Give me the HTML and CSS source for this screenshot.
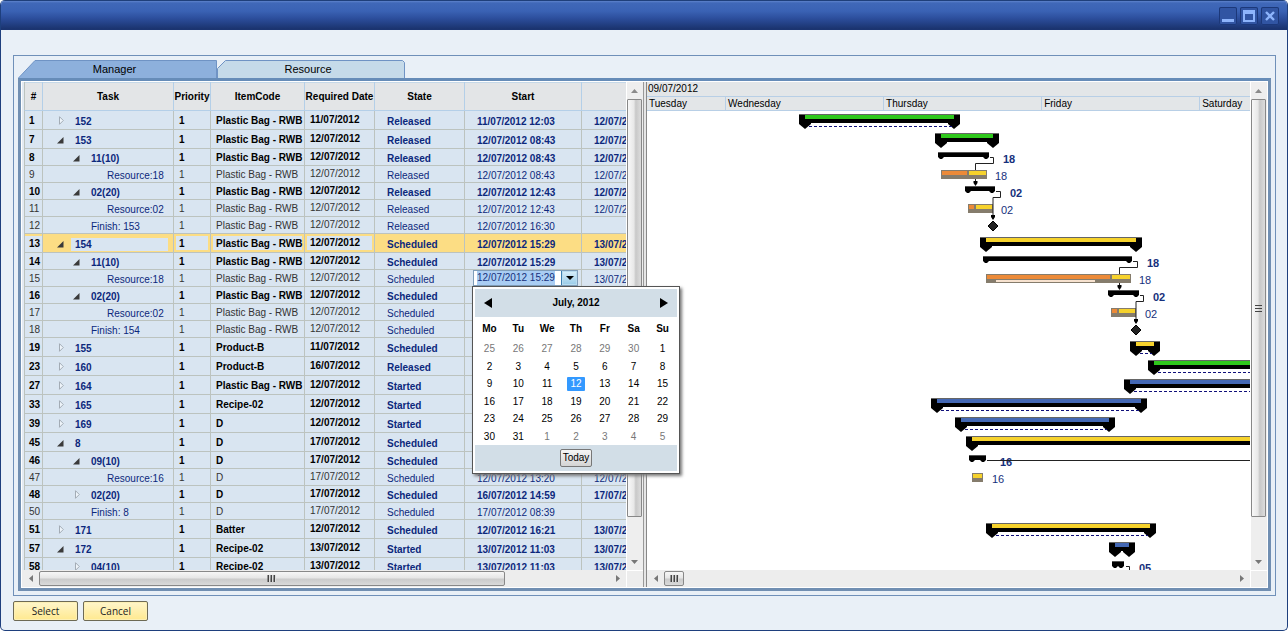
FILE: index.html
```html
<!DOCTYPE html>
<html lang="en">
<head>
<meta charset="utf-8">
<title>Production Schedule</title>
<link rel="stylesheet" href="styles.css">
</head>
<body>
<div class="window">
  <header class="titlebar">
    <button class="win-btn" type="button" aria-label="Minimize"><svg width="18" height="18" viewBox="0 0 18 18"><rect x="3" y="12" width="12" height="3" fill="#8db4fb"/></svg></button>
    <button class="win-btn" type="button" aria-label="Maximize"><svg width="18" height="18" viewBox="0 0 18 18"><path fill="#8db4fb" fill-rule="evenodd" d="M3 3h12v12H3zM5 7v6h8V7z"/></svg></button>
    <button class="win-btn" type="button" aria-label="Close"><svg width="18" height="18" viewBox="0 0 18 18"><path stroke="#8db4fb" stroke-width="2.4" fill="none" d="M5 5l8 8M13 5l-8 8"/></svg></button>
  </header>
  <main class="panel">
    <nav class="tabs" role="tablist">
      <button class="tab tab-active" type="button" role="tab" aria-selected="true">
        <svg class="tab-shape" viewBox="0 0 199 18" preserveAspectRatio="none"><path d="M0 18.5L17 .5H198.500V18.500z" fill="#8db0dc" stroke="#6f93c4"/></svg><span>Manager</span></button>
      <button class="tab tab-other" type="button" role="tab" aria-selected="false">
        <svg class="tab-shape" viewBox="0 0 188 18" preserveAspectRatio="none"><path d="M.5 18.500V8.500L8.500 .5H185.500L187.500 2.500V18.500z" fill="#c5dae9" stroke="#6f93c4"/></svg><span>Resource</span></button>
    </nav>
    <section class="workspace">
      <div class="left-pane">
        <div class="pane-top">
          <div class="grid-view">
            <table class="grid">
              <colgroup><col class="c-num"><col class="c-task"><col class="c-prio"><col class="c-item"><col class="c-date"><col class="c-state"><col class="c-start"><col class="c-end"></colgroup>
              <thead><tr><th>#</th><th>Task</th><th>Priority</th><th>ItemCode</th><th>Required Date</th><th>State</th><th>Start</th><th></th></tr></thead>
              <tbody id="rows"></tbody>
            </table>
          </div>
          <div class="vbar">
            <button class="sb-arrow" type="button" aria-label="Scroll up"><svg width="7" height="4"><path d="M0 4L3.500 0L7 4z" fill="#8a8a8a"/></svg></button>
            <div class="v-thumb"></div><div class="v-rest"></div>
            <button class="sb-arrow" type="button" aria-label="Scroll down"><svg width="7" height="4"><path d="M0 0L3.500 4L7 0z" fill="#777"/></svg></button>
          </div>
        </div>
        <div class="hbar">
          <button class="sb-arrow" type="button" aria-label="Scroll left"><svg width="4" height="7"><path d="M4 0L0 3.500L4 7z" fill="#777"/></svg></button>
          <div class="h-thumb h-thumb-grid"><svg width="9" height="7"><path d="M1.500 0v7M4.500 0v7M7.500 0v7" stroke="#444" stroke-width="2" /><path d="M2.500 0v7M5.500 0v7M8.500 0v7" stroke="#ddd"/></svg></div>
          <div class="h-rest"></div>
          <button class="sb-arrow" type="button" aria-label="Scroll right"><svg width="4" height="7"><path d="M0 0L4 3.500L0 7z" fill="#777"/></svg></button>
          <div class="corner"></div>
        </div>
      </div>
      <div class="splitter"></div>
      <div class="right-pane">
        <div class="pane-top">
          <div class="gantt">
            <div class="week">09/07/2012</div>
            <div class="days"><div class="day day-first">Tuesday</div><div class="day">Wednesday</div><div class="day">Thursday</div><div class="day">Friday</div><div class="day day-last">Saturday</div></div>
            <svg class="chart" id="chart" role="img" aria-label="Gantt chart"></svg>
          </div>
          <div class="vbar">
            <button class="sb-arrow" type="button" aria-label="Scroll up"><svg width="7" height="4"><path d="M0 4L3.500 0L7 4z" fill="#8a8a8a"/></svg></button>
            <div class="v-thumb"><svg width="7" height="9"><path d="M0 1.500h7M0 4.500h7M0 7.500h7" stroke="#444"/></svg></div><div class="v-rest"></div>
            <button class="sb-arrow" type="button" aria-label="Scroll down"><svg width="7" height="4"><path d="M0 0L3.500 4L7 0z" fill="#777"/></svg></button>
          </div>
        </div>
        <div class="hbar">
          <button class="sb-arrow" type="button" aria-label="Scroll left"><svg width="4" height="7"><path d="M4 0L0 3.500L4 7z" fill="#777"/></svg></button>
          <div class="h-thumb h-thumb-gantt"><svg width="9" height="7"><path d="M1.500 0v7M4.500 0v7M7.500 0v7" stroke="#444" stroke-width="2"/><path d="M2.500 0v7M5.500 0v7M8.500 0v7" stroke="#ddd"/></svg></div>
          <div class="h-rest"></div>
          <button class="sb-arrow" type="button" aria-label="Scroll right"><svg width="4" height="7"><path d="M0 0L4 3.500L0 7z" fill="#777"/></svg></button>
          <div class="corner"></div>
        </div>
      </div>
      <div class="picker">
        <div class="date-field"><input type="text" value="12/07/2012 15:29" aria-label="Start"><button type="button" aria-label="Open calendar"><svg width="8" height="4"><path d="M0 0h8L4 4z"/></svg></button></div>
        <div class="calendar">
          <div class="cal-head">
            <button type="button" aria-label="Previous month"><svg width="8" height="10"><path d="M8 0v10L0 5z"/></svg></button>
            <strong>July, 2012</strong>
            <button type="button" aria-label="Next month"><svg width="8" height="10"><path d="M0 0v10L8 5z"/></svg></button>
          </div>
          <table class="cal-days">
            <thead><tr><th>Mo</th><th>Tu</th><th>We</th><th>Th</th><th>Fr</th><th>Sa</th><th>Su</th></tr></thead>
            <tbody id="month"></tbody>
          </table>
          <div class="cal-foot"><button type="button">Today</button></div>
        </div>
      </div>
    </section>
  </main>
  <footer class="actions"><button type="button">Select</button><button type="button">Cancel</button></footer>
</div>
<script src="script.js"></script>
</body>
</html>
```
FILE: styles.css
```css
* { box-sizing: border-box; }
body { margin: 0; background: #fff; font: 10px/14px "Liberation Sans", Arial, sans-serif; color: #000; }
button { font: inherit; color: inherit; padding: 0; border: 0; background: none; display: flex; align-items: center; justify-content: center; }
svg { display: block; }

.window { height: 100vh; display: flex; flex-direction: column; background: #e9f0f7; border: 1px solid #1e3f7d; border-top: 0; border-radius: 5px; overflow: hidden; }
.titlebar { flex: none; height: 30px; display: flex; justify-content: flex-end; align-items: center; gap: 3px; padding-right: 8px; border-top: 1px solid #1f3f7a; background: linear-gradient(#5d83cc 0, #4068b8 2px, #3a62b4 35%, #2c4e9c 60%, #1b3470 95%, #1b3470); }
.win-btn { width: 18px; height: 18px; border-radius: 2px; background: #3155a3; box-shadow: inset 0 0 0 1px #1c3879; }

.panel { flex: 1; min-height: 0; margin: 25px 11px 0 12px; padding: 4px; border: 1px solid #6f90b9; display: flex; flex-direction: column; }
.tabs { flex: none; display: flex; }
.tab { position: relative; height: 18px; font-size: 11px; }
.tab span { position: relative; }
.tab-active { width: 199px; padding-right: 6px; }
.tab-other { width: 188px; padding-right: 6px; }
.tab-shape { position: absolute; inset: 0; width: 100%; height: 100%; }

.workspace { position: relative; flex: 1; min-height: 0; display: flex; border: 3px solid #718fb2; border-top-color: #668cb8; background: #fff; padding: 1px; }
.left-pane { flex: none; width: 621px; display: flex; flex-direction: column; }
.right-pane { flex: 1; min-width: 0; display: flex; flex-direction: column; }
.splitter { flex: none; width: 4px; background: #e6e6e6; border-left: 1px solid #999; border-right: 1px solid #888; }
.pane-top { flex: 1; min-height: 0; display: flex; }
.grid-view { flex: 1; min-width: 0; overflow: hidden; margin-right: 1px; border-left: 2px solid #e3eaf2; }

.grid { width: 675px; table-layout: fixed; border-collapse: separate; border-spacing: 0; }
.c-num { width: 19px; } .c-task { width: 131px; } .c-prio { width: 37px; } .c-item { width: 94px; }
.c-date { width: 70px; } .c-state { width: 90px; } .c-start { width: 117px; } .c-end { width: 117px; }
.grid th { height: 29px; padding: 2px 0 0; white-space: nowrap; background: #e3e5e7; border-right: 1px solid #b4cfe8; border-bottom: 1px solid #b4cfe8; box-shadow: inset 0 1px #c5d8e8; }
.grid td { height: 17px; padding: 0 0 0 5px; line-height: 13px; white-space: nowrap; overflow: hidden; background: #d9e5f1; border-right: 1px solid #bcc3bf; border-bottom: 1px solid #bcc3bf; }
.grid th:first-child, .grid td:first-child { border-left: 1px solid #bcc3bf; }
.grid td:first-child { padding-left: 4px; }
.grid .top td { height: 19px; }
.grid .bold td { font-weight: bold; }
.grid .plain td { color: #333; }
.grid td.date { padding-bottom: 2px; }
.grid td.low { padding-top: 2px; padding-left: 12px; color: #0c287c; }
.grid td.task { padding: 2px 0 0 13px; color: #0c287c; }
.tree { display: flex; align-items: flex-start; }
.lvl-2 { padding-left: 16px; }
.lvl-3 { padding-left: 32px; }
.toggle { flex: none; width: 19px; height: 11px; justify-content: flex-start; }
.grid .current td { box-shadow: inset 0 0 0 2px #fcdd84; }
.grid .current td:first-child { box-shadow: inset 0 2px #fcdd84; }
.grid .current td.low, .grid .current td.task { background: #fcdd84; }
.current .tree span { flex: 1; margin: 0 5px 0 -4px; padding-left: 4px; background: #d9e5f1; }

.vbar { flex: none; width: 16px; display: flex; flex-direction: column; background: #eeeeee; }
.v-thumb { flex: 418; margin-right: 1px; border: 1px solid #888; border-radius: 1px; background: linear-gradient(90deg, #f8f8f8, #e8e8e8 45%, #c8c8c8 60%, #dcdcdc); display: flex; align-items: center; justify-content: center; }
.v-rest { flex: 36; }
.sb-arrow { flex: none; width: 17px; height: 17px; }
.vbar .sb-arrow { width: 15px; }
.hbar { flex: none; height: 17px; display: flex; align-items: center; background: #ededed; }
.h-thumb { height: 15px; border: 1px solid #888; border-radius: 2px; background: linear-gradient(#f6f6f6, #e6e6e6 45%, #cbcbcb 55%, #dadada); display: flex; align-items: center; justify-content: center; }
.h-thumb-grid { flex: 466; }
.h-thumb-grid + .h-rest { flex: 105; }
.h-thumb-gantt { flex: none; width: 20px; }
.h-thumb-gantt + .h-rest { flex: 1; }
.corner { flex: none; width: 17px; height: 17px; border-left: 1px solid #fff; border-top: 1px solid #fff; }

.gantt { flex: 1; min-width: 0; margin-right: 1px; display: flex; flex-direction: column; overflow: hidden; }
.week { flex: none; height: 14px; line-height: 14px; padding-left: 1px; background: #e3e6e8; }
.days { flex: none; height: 15px; display: flex; background: #e3e6e8; border-top: 1px solid #b8cfe6; border-bottom: 1px solid #b8cfe6; }
.day { flex: 159; min-width: 0; padding-left: 2px; border-right: 1px solid #b8cfe6; }
.day-first { flex: 78; }
.day-last { flex: 49; border-right: 0; overflow: hidden; }
.chart { flex: 1; min-height: 0; width: 100%; overflow: hidden; }
.chart text { font-size: 11px; fill: #16307c; }
.chart .strong { font-weight: bold; }

.picker { position: absolute; left: 451px; top: 189px; width: 208px; }
.date-field { display: flex; width: 105px; height: 16px; margin-left: 1px; border: 1px solid #7f9db9; }
.date-field input { width: 87px; min-width: 0; padding: 0 0 0 3px; border: 0; background: linear-gradient(90deg, #fff 3px, #a9cdf3 3px, #a9cdf3 81px, #fff 81px); color: #16307c; font: inherit; }
.date-field button { flex: 1; border-left: 1px solid #3c7fb1; background: linear-gradient(#d9effb, #98cbe8); box-shadow: inset 0 0 0 1px #b8dcf0; }
.calendar { border: 1px solid #555; background: #fff; padding: 2px; box-shadow: 2px 2px 3px #777; }
.cal-head { height: 28px; display: flex; align-items: center; justify-content: space-between; padding: 0 9px; background: #d2dee7; }
.cal-days { width: 100%; table-layout: fixed; border-collapse: collapse; text-align: center; }
.cal-days th { padding: 5px 0 4px; }
.cal-days td { padding: 0; height: 17px; line-height: 14px; }
.cal-days tr:nth-child(odd) td { height: 18px; }
.cal-days .out { color: #777; }
.cal-days mark { display: block; width: 18px; margin: 0 auto; background: #3399ff; color: #fff; border-radius: 1px; }
.cal-foot { height: 26px; display: flex; align-items: center; justify-content: center; background: #d2dee7; }
.cal-foot button { height: 18px; width: 32px; border: 1px solid #777; border-radius: 2px; background: linear-gradient(#f6f6f6, #d4d4d4); }

.actions { flex: none; display: flex; gap: 5px; padding: 5px 12px 9px; }
.actions button { width: 65px; height: 20px; border: 1px solid #6d6a55; border-radius: 2px; background: linear-gradient(#fff6cb, #ffe98f); box-shadow: inset 0 0 0 1px #fdf0b4; font-family: "Open Sans", "Noto Sans", sans-serif; color: #222; }
```
FILE: script.js
```js
// num, level, toggle (c = collapsed, e = expanded, '' = leaf), task, item, date, state, start, end
const BAG = 'Plastic Bag - RWB';
const ROWS = [
  [1, 1, 'c', '152', BAG, '11/07/2012', 'Released', '11/07/2012 12:03', '12/07/2012'],
  [7, 1, 'e', '153', BAG, '12/07/2012', 'Released', '12/07/2012 08:43', '12/07/2012'],
  [8, 2, 'e', '11(10)', BAG, '12/07/2012', 'Released', '12/07/2012 08:43', '12/07/2012'],
  [9, 3, '', 'Resource:18', BAG, '12/07/2012', 'Released', '12/07/2012 08:43', '12/07/2012'],
  [10, 2, 'e', '02(20)', BAG, '12/07/2012', 'Released', '12/07/2012 12:43', '12/07/2012'],
  [11, 3, '', 'Resource:02', BAG, '12/07/2012', 'Released', '12/07/2012 12:43', '12/07/2012'],
  [12, 2, '', 'Finish: 153', BAG, '12/07/2012', 'Released', '12/07/2012 16:30', ''],
  [13, 1, 'e', '154', BAG, '12/07/2012', 'Scheduled', '12/07/2012 15:29', '13/07/2012'],
  [14, 2, 'e', '11(10)', BAG, '12/07/2012', 'Scheduled', '12/07/2012 15:29', '13/07/2012'],
  [15, 3, '', 'Resource:18', BAG, '12/07/2012', 'Scheduled', '', '13/07/2012'],
  [16, 2, 'e', '02(20)', BAG, '12/07/2012', 'Scheduled', '', ''],
  [17, 3, '', 'Resource:02', BAG, '12/07/2012', 'Scheduled', '', ''],
  [18, 2, '', 'Finish: 154', BAG, '12/07/2012', 'Scheduled', '', ''],
  [19, 1, 'c', '155', 'Product-B', '11/07/2012', 'Scheduled', '', ''],
  [23, 1, 'c', '160', 'Product-B', '16/07/2012', 'Released', '', ''],
  [27, 1, 'c', '164', BAG, '12/07/2012', 'Started', '', ''],
  [33, 1, 'c', '165', 'Recipe-02', '12/07/2012', 'Started', '', ''],
  [39, 1, 'c', '169', 'D', '12/07/2012', 'Started', '', ''],
  [45, 1, 'e', '8', 'D', '17/07/2012', 'Scheduled', '', ''],
  [46, 2, 'e', '09(10)', 'D', '17/07/2012', 'Scheduled', '', ''],
  [47, 3, '', 'Resource:16', 'D', '17/07/2012', 'Scheduled', '12/07/2012 13:20', '12/07/2012'],
  [48, 2, 'c', '02(20)', 'D', '17/07/2012', 'Scheduled', '16/07/2012 14:59', '17/07/2012'],
  [50, 2, '', 'Finish: 8', 'D', '17/07/2012', 'Scheduled', '17/07/2012 08:39', ''],
  [51, 1, 'c', '171', 'Batter', '12/07/2012', 'Scheduled', '12/07/2012 16:21', '13/07/2012'],
  [57, 1, 'e', '172', 'Recipe-02', '13/07/2012', 'Started', '13/07/2012 11:03', '13/07/2012'],
  [58, 2, 'c', '04(10)', 'Recipe-02', '13/07/2012', 'Started', '13/07/2012 11:03', '13/07/2012']
];

const ICON = {
  e: '<svg width="9" height="9"><path d="M1 8.500H7.500V2z" fill="#3a3a3a"/></svg>',
  c: '<svg width="9" height="9"><path d="M3.500 .7V8.300L7.300 4.500z" fill="#eef4fa" stroke="#a3acb5"/></svg>'
};

const tops = {};
let y = 0, html = '';
for (const [num, lvl, tog, task, item, date, state, start, end] of ROWS) {
  tops[num] = y;
  y += lvl === 1 ? 19 : 17;
  const cls = [lvl === 1 ? 'top' : '', tog ? 'bold' : 'plain', num === 13 ? 'current' : ''].join(' ');
  const btn = tog
    ? `<button class="toggle" type="button" aria-label="${tog === 'e' ? 'Collapse' : 'Expand'} ${task}">${ICON[tog]}</button>`
    : '<i class="toggle"></i>';
  html += `<tr class="${cls}"><td>${num}</td><td class="task"><div class="tree lvl-${lvl}">${btn}<span>${task}</span></div></td>` +
    `<td>1</td><td>${item}</td><td class="date">${date}</td><td class="low">${state}</td><td class="low">${start}</td><td class="low">${end}</td></tr>`;
}
document.getElementById('rows').innerHTML = html;

// Calendar weeks
const days = [25, 26, 27, 28, 29, 30];
for (let d = 1; d <= 31; d++) days.push(d);
days.push(1, 2, 3, 4, 5);
let month = '';
for (let w = 0; w < 6; w++) {
  month += '<tr>' + days.slice(w * 7, w * 7 + 7).map((d, i) => {
    const idx = w * 7 + i;
    const out = idx < 6 || idx > 36;
    return `<td${out ? ' class="out"' : ''}>${!out && d === 12 ? '<mark>12</mark>' : d}</td>`;
  }).join('') + '</tr>';
}
document.getElementById('month').innerHTML = month;

// Gantt shapes
const GREEN = '#2fc81c', YELLOW = '#f6d22c', BLUE = '#4468b4', ORANGE = '#ec8a38', FRAME = '#857c6c';
const OFF = 700;
const rect = (x, y, w, h, f) => `<rect x="${x}" y="${y}" width="${w}" height="${h}" fill="${f}"/>`;
const path = (d, extra) => `<path d="${d}" ${extra || ''}/>`;

function summary(n, x1, x2, color, dotted) {
  const t = tops[n] + 3, open = x2 > OFF;
  let s = rect(x1, t, x2 - x1, 9, '#000') + rect(x1, t, x2 - x1, 1, '#666') + rect(x1 + 6, t + 1, x2 - x1 - (open ? 6 : 12), 4, color);
  s += path(`M${x1} ${t + 8}h12v2l-6 5l-6 -5z`);
  if (!open) s += path(`M${x2} ${t + 8}h-12v2l6 5l6 -5z`);
  if (dotted) s += path(`M${x1 + 10} ${t + 12.5}H${open ? x2 : x2 - 8}`, 'stroke="#10107a" stroke-dasharray="3 2"');
  return s;
}
function sub(n, x1, x2) {
  const t = tops[n] + 3;
  return rect(x1, t, x2 - x1, 5, '#000') + rect(x1, t, x2 - x1, 1, '#555') +
    path(`M${x1} ${t + 5}h6l-2 2h-2zM${x2} ${t + 5}h-6l2 2h2z`);
}
function task(n, x1, split, x2) {
  const t = tops[n] + 4;
  let s = rect(x1, t, x2 - x1, 9, FRAME);
  if (split) s += rect(x1 + 1, t + 1, split - x1 - 1, 4, ORANGE);
  const s2 = split ? split + 2 : x1 + 1;
  return s + rect(s2, t + 1, x2 - 1 - s2, 4, YELLOW);
}
const diamond = (n, x) => path(`M${x} ${tops[n] + 4}l5 5l-5 5l-5 -5z`, 'fill="#222" stroke="#000"');
const line = d => path(d, 'fill="none" stroke="#222"');
const arrow = (x, y) => path(`M${x - 2} ${y - 5}h4v2l-2 3l-2 -3z`);
const label = (n, x, t, strong) => `<text x="${x}" y="${tops[n] + 14}"${strong ? ' class="strong"' : ''}>${t}</text>`;

document.getElementById('chart').innerHTML = [
  summary(1, 152, 313, GREEN, true),
  summary(7, 288, 352, GREEN),
  sub(8, 291, 342), label(8, 356, '18', true),
  task(9, 294, 320, 340), label(9, 348, '18'),
  line('M343 46.500H346.500V52.500H328.500V59M328.500 68V73'), arrow(328.5, 75),
  sub(10, 318, 348), label(10, 363, '02', true),
  task(11, 321, 327, 346), label(11, 354, '02'),
  line('M349 80.500H353.500V86.500H346V108'), arrow(346, 109),
  diamond(12, 346),
  summary(13, 333, 495, YELLOW),
  sub(14, 336, 485), label(14, 500, '18', true),
  task(15, 339, 463, 484), rect(349, tops[15] + 10, 99, 2, '#f7e2cf'), label(15, 492, '18'),
  line('M486 150.500H490.500V156.500H472.500V163M472.500 172V177'), arrow(472.5, 179),
  sub(16, 461, 492), label(16, 506, '02', true),
  task(17, 464, 470, 489), label(17, 498, '02'),
  line('M493 184.500H496.500V190.500H489V212'), arrow(489, 213),
  diamond(18, 489),
  summary(19, 483, 513, YELLOW, true),
  summary(23, 501, 2400, GREEN, true),
  summary(27, 477, 2400, BLUE, true),
  summary(33, 284, 500, BLUE, true),
  summary(39, 308, 468, BLUE, true),
  summary(45, 319, 2400, YELLOW),
  sub(46, 322, 339), label(46, 353, '16', true), line('M340 349.500H2400'),
  task(47, 325, 0, 336), label(47, 345, '16'),
  summary(51, 339, 509, YELLOW, true),
  summary(57, 462, 488, BLUE),
  sub(58, 465, 477), line('M479 455.500H482.500V470'), label(58, 492, '05', true)
].join('');
```
